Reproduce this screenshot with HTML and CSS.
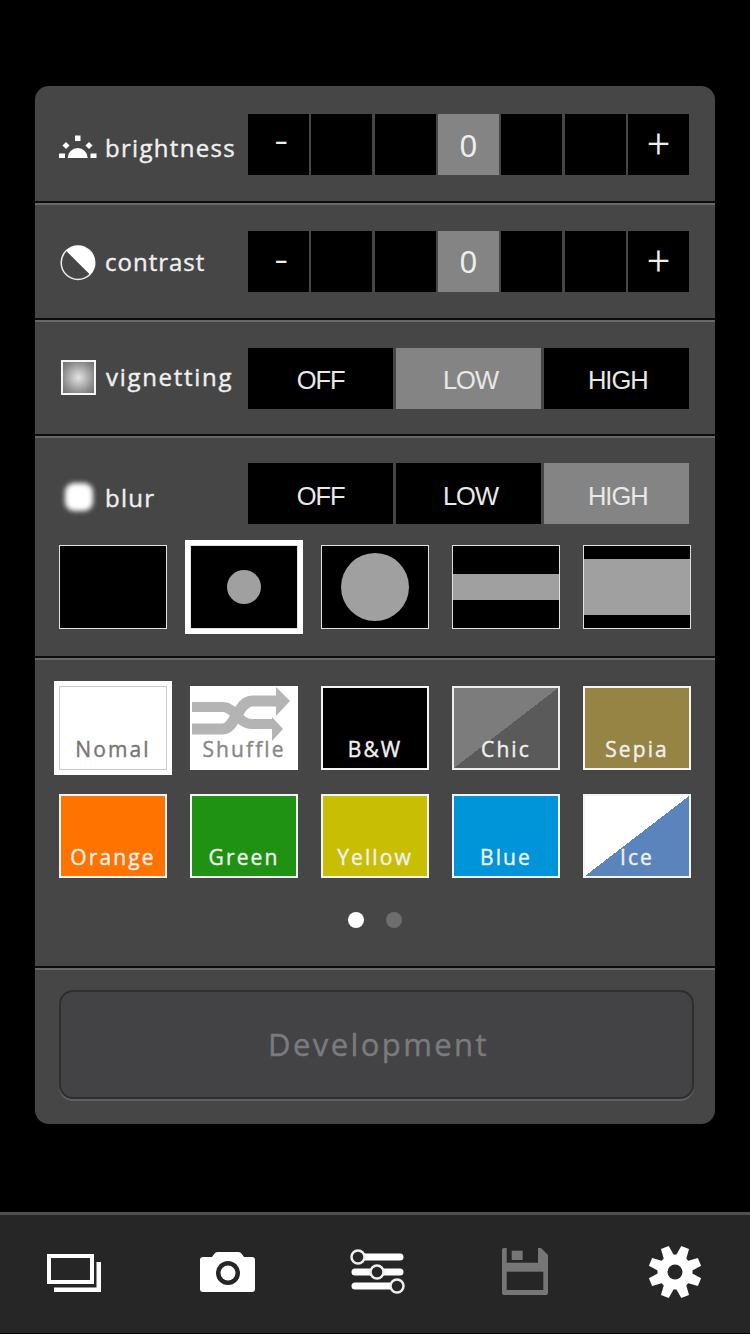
FILE: index.html
```html
<!DOCTYPE html>
<html lang="en">
<head>
<meta charset="utf-8">
<title>Camera settings</title>
<link rel="stylesheet" href="styles.css">
</head>
<body>
<main class="panel">
  <section class="section s-row s1">
    <div class="label">
      <svg class="lbl-icon" width="40" height="40" viewBox="0 0 40 40"><path class="w" d="M8.700 31a10 10 0 0 1 20 0z"/><rect class="w" x="16" y="8.500" width="5.500" height="5.500"/><rect class="w" x="4.500" y="16" width="5" height="5" transform="rotate(45 7 18.500)"/><rect class="w" x="27.500" y="16" width="5" height="5" transform="rotate(45 30 18.500)"/><rect class="w" x="0" y="26.500" width="6" height="4.500"/><rect class="w" x="31.500" y="26.500" width="6" height="4.500"/></svg>
      <span class="lbl-text t-bright">brightness</span>
    </div>
    <div class="seg seg7">
      <div class="cell minus">-</div><div class="cell"></div><div class="cell"></div><div class="cell on">0</div><div class="cell"></div><div class="cell"></div><div class="cell plus">+</div>
    </div>
  </section>
  <section class="section s-row s2">
    <div class="label">
      <svg class="lbl-icon" width="40" height="40" viewBox="0 0 40 40"><circle cx="19" cy="19.700" r="16.800" fill="none" stroke="#eee" stroke-width="1.500"/><path class="w" d="M7.100 7.800a16.800 16.800 0 0 1 23.800 23.800z"/></svg>
      <span class="lbl-text t-contrast">contrast</span>
    </div>
    <div class="seg seg7">
      <div class="cell minus">-</div><div class="cell"></div><div class="cell"></div><div class="cell on">0</div><div class="cell"></div><div class="cell"></div><div class="cell plus">+</div>
    </div>
  </section>
  <section class="section s-row s3">
    <div class="label">
      <div class="vig"></div>
      <span class="lbl-text t-vig">vignetting</span>
    </div>
    <div class="seg seg3">
      <div class="cell">OFF</div><div class="cell on">LOW</div><div class="cell">HIGH</div>
    </div>
  </section>
  <section class="section s4">
    <div class="s-row blur-row">
      <div class="label">
        <div class="blur-wrap"><div class="blur-dot"></div></div>
        <span class="lbl-text t-blur">blur</span>
      </div>
      <div class="seg seg3">
        <div class="cell">OFF</div><div class="cell">LOW</div><div class="cell on">HIGH</div>
      </div>
    </div>
    <div class="tiles">
      <div class="tile dark"></div>
      <div class="tile dark sel"><div class="disc small"></div></div>
      <div class="tile dark"><div class="disc big"></div></div>
      <div class="tile dark"><div class="band narrow"></div></div>
      <div class="tile dark"><div class="band wide"></div></div>
    </div>
  </section>
  <section class="section s5">
    <div class="tiles">
      <div class="tile fx nomal sel">Nomal</div>
      <div class="tile fx shuffle">
        <svg class="shuffle-svg" width="108" height="84" viewBox="0 0 108 84"><path class="sh" d="M2 22H33C45 22 48 39 62 39H84"/><path class="sh2" d="M2 44H33C45 44 48 16 62 16H88"/><path class="sf" d="M82 32L93 44L82 56z"/><path class="sf" d="M86 2L100 16L86 31z"/></svg>
        <span class="shuffle-text">Shuffle</span>
      </div>
      <div class="tile fx bw">B&amp;W</div>
      <div class="tile fx chic">Chic</div>
      <div class="tile fx sepia">Sepia</div>
    </div>
    <div class="tiles row2">
      <div class="tile fx orange">Orange</div>
      <div class="tile fx green">Green</div>
      <div class="tile fx yellow">Yellow</div>
      <div class="tile fx blue">Blue</div>
      <div class="tile fx ice">Ice</div>
    </div>
    <div class="dots"><span class="dot on"></span><span class="dot"></span></div>
  </section>
  <section class="section s6">
    <div class="dev">Development</div>
  </section>
</main>
<nav class="bar">
  <svg width="60" height="60" viewBox="0 0 60 60"><rect x="4" y="14" width="43" height="26" fill="none" stroke="#fff" stroke-width="4"/><path class="w" d="M51.500 20H56V50H9V45.500H51.500z"/></svg>
  <svg width="60" height="60" viewBox="0 0 60 60"><path class="w" d="M8 15H17L20 11Q21 10 23 10H43Q45 10 46 11L49 15H57Q60 15 60 18V47Q60 50 57 50H8Q5 50 5 47V18Q5 15 8 15z"/><circle cx="33" cy="31" r="12" fill="#262626"/><circle class="w" cx="33" cy="31" r="7.500"/></svg>
  <svg width="60" height="60" viewBox="0 0 60 60"><g stroke="#fff" stroke-width="7" stroke-linecap="round"><path d="M10 15H55"/><path d="M10 30H55"/><path d="M10 44H55"/></g><g fill="#262626" stroke="#eee" stroke-width="2.500"><circle cx="13" cy="15" r="6.500"/><circle cx="32" cy="30" r="6.500"/><circle cx="52" cy="44" r="6.500"/></g></svg>
  <svg width="60" height="60" viewBox="0 0 60 60"><path fill="#767676" d="M9 6H46L53 13V51Q53 53 51 53H9Q7 53 7 51V8Q7 6 9 6z"/><rect x="11.700" y="6" width="31.300" height="14.700" fill="#262626"/><rect x="16.700" y="8.700" width="11" height="9.300" fill="#767676"/><rect x="11.700" y="29.700" width="36.600" height="18.300" fill="#262626"/></svg>
  <svg width="60" height="60" viewBox="0 0 60 60"><circle class="w" cx="30" cy="30" r="17.500"/><g class="w"><path d="M24.500 15L25.800 3.500H34.200L35.500 15z" transform="rotate(22.500 30 30)"/><path d="M24.500 15L25.800 3.500H34.200L35.500 15z" transform="rotate(67.500 30 30)"/><path d="M24.500 15L25.800 3.500H34.200L35.500 15z" transform="rotate(112.500 30 30)"/><path d="M24.500 15L25.800 3.500H34.200L35.500 15z" transform="rotate(157.500 30 30)"/><path d="M24.500 15L25.800 3.500H34.200L35.500 15z" transform="rotate(202.500 30 30)"/><path d="M24.500 15L25.800 3.500H34.200L35.500 15z" transform="rotate(247.500 30 30)"/><path d="M24.500 15L25.800 3.500H34.200L35.500 15z" transform="rotate(292.500 30 30)"/><path d="M24.500 15L25.800 3.500H34.200L35.500 15z" transform="rotate(337.500 30 30)"/></g><circle cx="30" cy="30" r="7.500" fill="#262626"/></svg>
</nav>
</body>
</html>
```

FILE: styles.css
```css
* { box-sizing: border-box; }
html, body { margin: 0; padding: 0; }
body {
  width: 750px;
  height: 1334px;
  background: #000;
  display: flex;
  flex-direction: column;
  overflow: hidden;
  font-family: "Open Sans", "Noto Sans", sans-serif;
}
.w { fill: #fff; }

.panel {
  margin: 86px 35px 0;
  width: 680px;
  height: 1038px;
  background: #464646;
  border-radius: 14px;
  display: flex;
  flex-direction: column;
  overflow: hidden;
}
.section { border-top: 2px solid #686868; border-bottom: 2px solid #0c0c0c; }
.section:first-child { border-top: 0; }
.section:last-child { border-bottom: 0; }

.s-row { display: flex; align-items: flex-start; }
.s1 { height: 117px; padding-top: 28px; }
.s2, .s3 { height: 117px; padding-top: 26px; }
.s4 { height: 222px; padding-top: 25px; }
.s5 { height: 311px; padding-top: 26px; }
.s6 { flex: 1; padding: 20px 21px 25px 24px; }

.label { width: 213px; height: 61px; padding-left: 24px; display: flex; align-items: flex-start; color: #f0f0f0; }
.lbl-icon { flex: none; width: 40px; height: 40px; margin-right: 6px; overflow: visible; }
.s1 .lbl-icon { margin-top: 13px; }
.s2 .lbl-icon { margin-top: 12px; }
.lbl-text { font-size: 24px; line-height: 34px; letter-spacing: 1.300px; white-space: nowrap; -webkit-text-stroke: 0.4px currentColor; }
.t-bright { margin-top: 17px; }
.t-contrast { margin-top: 14px; letter-spacing: 1px; }
.t-vig { margin-top: 12px; margin-left: 9px; letter-spacing: 1.700px; }
.t-blur { margin-top: 18px; margin-left: 8px; }

.vig {
  flex: none;
  width: 35px;
  height: 35px;
  margin: 12px 1px 0 2px;
  border: 2.500px solid #f6f6f6;
  background: radial-gradient(circle, #e4e4e4 0%, #8c8c8c 70%, #707070 100%);
}
.blur-wrap { flex: none; width: 38px; height: 38px; margin-top: 15px; display: flex; align-items: center; justify-content: center; }
.blur-dot { width: 28px; height: 28px; margin-left: 2px; border-radius: 9px; background: #fff; filter: blur(2.500px); }

.seg { width: 441px; height: 61px; display: grid; gap: 2.500px; color: #e8e8e8; }
.seg7 { grid-template-columns: repeat(7, 1fr); }
.seg3 { grid-template-columns: repeat(3, 1fr); }
.cell {
  background: #000;
  display: flex;
  align-items: center;
  justify-content: center;
  font-family: "Liberation Sans", Arial, sans-serif;
  font-size: 25.500px;
  letter-spacing: -1px;
  padding-top: 5px;
}
.seg3 .cell:nth-child(2) { padding-left: 4px; }
.seg3 .cell:nth-child(3) { padding-left: 3px; }
.cell.on { background: #848484; }
.seg7 .cell { font-size: 31px; padding-top: 4px; letter-spacing: 0; color: #eee; }
.seg7 .plus { font-family: Roboto, sans-serif; font-weight: 300; font-size: 40px; padding-top: 0; }
.seg7 .minus { font-family: Roboto, sans-serif; font-weight: 300; font-size: 44px; padding: 0 0 6px 6px; }
.s2 .seg7 .minus { padding-bottom: 0; }

.tiles { display: flex; justify-content: space-between; width: 632px; margin-left: 24px; }
.blur-row + .tiles { margin-top: 21px; }
.row2 { margin-top: 24px; }
.tile { width: 108px; height: 84px; flex: none; }
.tile.dark {
  background: #000;
  border: 1px solid #e0e0e0;
  display: flex;
  align-items: center;
  justify-content: center;
}
.disc { border-radius: 50%; background: #a0a0a0; }
.disc.small { width: 34px; height: 34px; }
.disc.big { width: 68px; height: 68px; }
.band { width: 100%; background: #a0a0a0; }
.band.narrow { height: 26px; }
.band.wide { height: 56px; }
.sel { box-shadow: 0 0 0 5px #fff; }

.fx {
  border: 2.500px solid #f4f4f4;
  display: flex;
  align-items: flex-end;
  justify-content: center;
  font-size: 21px;
  line-height: 28px;
  letter-spacing: 2.100px;
  color: #f0f0f0;
  -webkit-text-stroke: 0.4px currentColor;
  padding-bottom: 5px;
  position: relative;
}
.nomal { background: #fff; border: 1px solid #ccc; color: #777; padding-bottom: 6px; }
.shuffle { background: #fff; border-color: #fff; color: #888; }
.shuffle-svg { position: absolute; left: -2.500px; top: -2.500px; }
.shuffle-text { position: relative; }
.sh, .sh2 { fill: none; stroke: #b4b4b4; stroke-width: 10; }
.sh2 { stroke-width: 11; }
.sf { fill: #b4b4b4; }
.bw { background: #000; }
.chic { background: linear-gradient(to bottom right, #7c7c7c 50%, #5a5a5a 50%); border-color: #eee; }
.sepia { background: #968445; }
.orange { background: #ff7300; }
.green { background: #209213; }
.yellow { background: #c8bf05; }
.blue { background: #0094d9; }
.ice { background: linear-gradient(to bottom right, #fff 50%, #5b84bd 50%); }

.dots { display: flex; justify-content: center; gap: 22px; margin-top: 34px; }
.dot { width: 16px; height: 16px; border-radius: 50%; background: #6e6e6e; }
.dot.on { background: #fff; }

.dev {
  height: 109px;
  background: #434345;
  border: 2px solid #2e2e2e;
  border-radius: 14px;
  box-shadow: 0 2px 0 #606060;
  display: flex;
  align-items: center;
  justify-content: center;
  font-size: 31px;
  letter-spacing: 2.400px;
  color: #7b7b7d;
  -webkit-text-stroke: 0.4px currentColor;
  padding: 0 0 2px 4px;
}

.bar {
  margin-top: auto;
  height: 122px;
  background: #262626;
  border-top: 3px solid #4e4e4e;
  border-bottom: 1px solid #000;
  padding: 27px 45px 0;
  display: flex;
  justify-content: space-between;
  align-items: flex-start;
}
```
